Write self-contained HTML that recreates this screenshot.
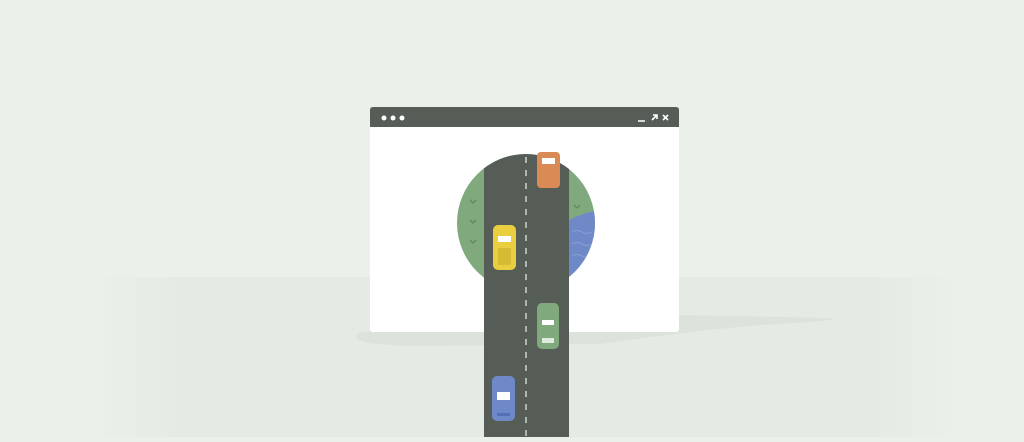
<!DOCTYPE html>
<html><head><style>body{margin:0;background:#eaf0ea;overflow:hidden}</style></head><body>
<svg width="1024" height="437" viewBox="0 0 1024 437" xmlns="http://www.w3.org/2000/svg">
<defs>
<linearGradient id="b" x1="0" x2="1" y1="0" y2="0"><stop offset="0" stop-color="#eaf0ea"/><stop offset="0.1" stop-color="#e4ebe4"/><stop offset="0.9" stop-color="#e4ebe4"/><stop offset="1" stop-color="#eaf0ea"/></linearGradient>
<clipPath id="c"><circle cx="526" cy="223" r="69"/></clipPath></defs>
<rect width="1024" height="437" fill="#eaf0ea"/>
<rect x="90" y="277" width="870" height="160" fill="url(#b)"/>
<path d="M360 332 Q340 345 420 346 L600 344 Q700 330 760 325 Q850 320 830 318 L680 315 Z" fill="#dbe3db"/>
<rect x="370" y="107" width="309" height="225" rx="3" fill="#fff"/>
<path d="M373 107 H676 Q679 107 679 110 V127 H370 V110 Q370 107 373 107 Z" fill="#565d56"/>
<circle cx="384" cy="118" r="2.5" fill="#fff"/><circle cx="393" cy="118" r="2.5" fill="#fff"/><circle cx="402" cy="118" r="2.5" fill="#fff"/>
<path d="M638 121 H645 M652 120 L657 115 M653 115 H657 V119 M663 115 L668 120 M668 115 L663 120" stroke="#fff" stroke-width="1.6" fill="none"/>
<circle cx="526" cy="223" r="69" fill="#80a97e"/>
<g clip-path="url(#c)"><path d="M569 220 Q585 212 600 210 V300 H569 Z" fill="#6f88c8"/>
<path d="M572 232 q5 -3 10 0 t10 0 M572 244 q5 -3 10 0 t10 0 M572 256 q5 -3 10 0 t10 0" stroke="#8aa0d6" stroke-width="1" fill="none"/></g>
<path d="M470 200 l3 3 3 -3 M470 220 l3 3 3 -3 M470 240 l3 3 3 -3 M574 205 l3 3 3 -3" stroke="#5f8a5e" stroke-width="1.3" fill="none"/>
<path d="M484 172 Q526 140 569 172 V437 H484 Z" fill="#565d56"/>
<g clip-path="url(#c)"><rect x="484" y="150" width="85" height="30" fill="#565d56"/></g>
<line x1="526" y1="157" x2="526" y2="437" stroke="#dfe5df" stroke-width="1.3" stroke-dasharray="6 7"/>
<rect x="537" y="152" width="23" height="36" rx="4" fill="#d98a55"/><rect x="542" y="158" width="13" height="6" fill="#fff"/>
<rect x="493" y="225" width="23" height="45" rx="5" fill="#e9cf3f"/><rect x="498" y="236" width="13" height="6" fill="#fff"/><rect x="498" y="248" width="13" height="17" fill="#d6bb35"/>
<rect x="537" y="303" width="22" height="46" rx="5" fill="#80a97e"/><rect x="542" y="320" width="12" height="5" fill="#fff"/><rect x="542" y="338" width="12" height="5" fill="#dfeadf"/>
<rect x="492" y="376" width="23" height="45" rx="5" fill="#6f88c8"/><rect x="497" y="392" width="13" height="8" fill="#fff"/><rect x="497" y="413" width="13" height="3" fill="#5571b5"/>
</svg>
</body></html>
